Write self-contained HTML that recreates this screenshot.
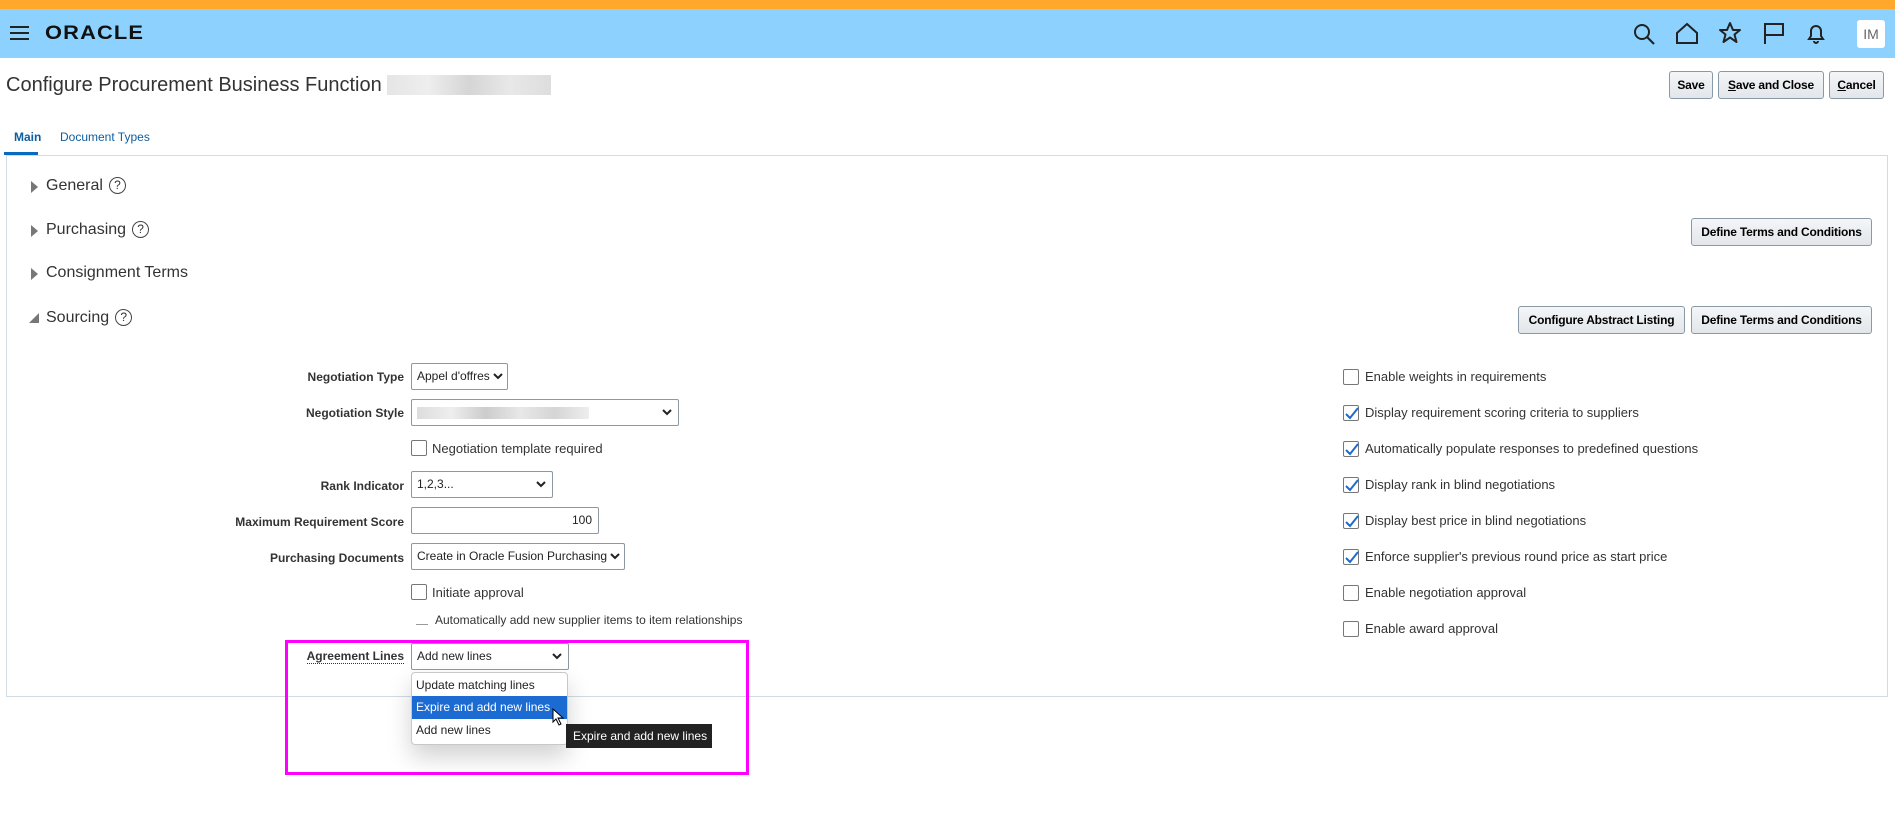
<!DOCTYPE html>
<html><head><meta charset="utf-8"><style>
*{box-sizing:border-box;margin:0;padding:0}
body{width:1895px;height:823px;background:#fff;font-family:"Liberation Sans",Arial,sans-serif;color:#333;position:relative;overflow:hidden}
.a{position:absolute}
.top{left:0;top:0;width:1895px;height:9px;background:#ffa82c}
.hdr{left:0;top:9px;width:1895px;height:49px;background:#8dd2ff}
.btn{position:absolute;height:28px;border:1px solid #8a99a8;border-radius:3px;background:linear-gradient(#f4f6f8,#e2e6ea);font-weight:bold;font-size:12px;color:#000;text-align:center;line-height:26px;white-space:nowrap;letter-spacing:-0.2px}
.lbl{position:absolute;right:1491px;font-size:12px;font-weight:bold;color:#333;white-space:nowrap}
.sel{position:absolute;left:411px;height:27px;border:1px solid #8e98a3;border-radius:2px;background:#fff;font-size:12px;line-height:25px;padding-left:5px;color:#222;white-space:nowrap;overflow:hidden}
.sel svg{position:absolute;right:6px;top:9px}
.cb{position:absolute;width:16px;height:16px;border:1px solid #777;border-radius:2px;background:#fff}
.ct{position:absolute;font-size:13px;color:#333;white-space:nowrap}
.sec{position:absolute;left:46px;font-size:16px;color:#333}
.tri{position:absolute;left:31px;width:0;height:0;border-top:6px solid transparent;border-bottom:6px solid transparent;border-left:7px solid #777}
.q{display:inline-block;width:17px;height:17px;border:1.3px solid #444;border-radius:50%;font-size:12px;text-align:center;line-height:15px;margin-left:6px;vertical-align:1px}
</style></head><body>
<div class="a top"></div>
<div class="a hdr">
 <svg class="a" style="left:10px;top:16px" width="20" height="16"><path d="M0 2h19M0 8h19M0 14h19" stroke="#222" stroke-width="2"/></svg>
 <div class="a" style="left:45px;top:14px;font-size:19px;font-weight:bold;letter-spacing:1px;color:#111;transform:scaleX(1.15);transform-origin:left">ORACLE</div>
 <svg class="a" style="left:1632px;top:13px" width="24" height="24"><circle cx="10" cy="10" r="7" fill="none" stroke="#222" stroke-width="2"/><path d="M15 15l7 7" stroke="#222" stroke-width="2.2"/></svg>
 <svg class="a" style="left:1675px;top:12px" width="24" height="24"><path d="M2 12L12 3l10 9v10H2z" fill="none" stroke="#222" stroke-width="2"/></svg>
 <svg class="a" style="left:1718px;top:12px" width="24" height="24"><path d="M12 2l3 7h7l-5.5 4.5 2 7.5-6.5-4.5-6.5 4.5 2-7.5L2 9h7z" fill="none" stroke="#222" stroke-width="2" stroke-linejoin="round"/></svg>
 <svg class="a" style="left:1762px;top:12px" width="24" height="24"><path d="M3 23V3h18v11H3" fill="none" stroke="#222" stroke-width="2"/></svg>
 <svg class="a" style="left:1804px;top:12px" width="24" height="24"><path d="M5 18h14l-2-3v-5a5 5 0 0 0-10 0v5z" fill="none" stroke="#222" stroke-width="2"/><path d="M10 20a2 2 0 0 0 4 0" fill="none" stroke="#222" stroke-width="2"/></svg>
 <div class="a" style="left:1857px;top:11px;width:28px;height:28px;background:#fff;border-radius:3px;font-size:14px;color:#666;text-align:center;line-height:28px">IM</div>
</div>
<div class="a" style="left:6px;top:74px;font-size:20px;color:#333">Configure Procurement Business Function <span style="display:inline-block;width:164px;height:20px;vertical-align:-4px;background:linear-gradient(90deg,#e5e5e5,#eee,#d5d5d5,#e8e8e8,#ddd)"></span></div>
<div class="btn" style="left:1669px;top:71px;width:44px">Save</div>
<div class="btn" style="left:1718px;top:71px;width:106px"><u>S</u>ave and Close</div>
<div class="btn" style="left:1829px;top:71px;width:55px"><u>C</u>ancel</div>
<div class="a" style="left:14px;top:130px;font-size:12px;color:#0e5d9e;font-weight:bold">Main</div>
<div class="a" style="left:60px;top:130px;font-size:12px;color:#0e5d9e">Document Types</div>
<div class="a" style="left:4px;top:152px;width:34px;height:3px;background:#0a6ac1"></div>
<div class="a" style="left:6px;top:155px;width:1882px;height:542px;border:1px solid #d3dbe2"></div>
<div class="tri" style="top:181px"></div><div class="sec" style="top:177px">General<span class="q">?</span></div>
<div class="tri" style="top:225px"></div><div class="sec" style="top:221px">Purchasing<span class="q">?</span></div>
<div class="tri" style="top:268px"></div><div class="sec" style="top:264px">Consignment Terms</div>
<svg class="a" style="left:28px;top:312px" width="12" height="12"><path d="M11 1L11 11L1 11z" fill="#777"/></svg>
<div class="sec" style="top:309px">Sourcing<span class="q">?</span></div>
<div class="btn" style="left:1691px;top:218px;width:181px">Define Terms and Conditions</div>
<div class="btn" style="left:1518px;top:306px;width:167px">Configure Abstract Listing</div>
<div class="btn" style="left:1691px;top:306px;width:181px">Define Terms and Conditions</div>

<div class="lbl" style="top:370px">Negotiation Type</div>
<div class="sel" style="top:363px;width:97px">Appel d'offres<svg width="10" height="7" style="right:4px"><path d="M1 1l4 4 4-4" fill="none" stroke="#222" stroke-width="2"/></svg></div>
<div class="lbl" style="top:406px">Negotiation Style</div>
<div class="sel" style="top:399px;width:268px"><span style="display:inline-block;width:172px;height:12px;vertical-align:middle;background:linear-gradient(90deg,#ddd,#eee,#ccc,#e8e8e8,#d5d5d5,#eee)"></span><svg width="10" height="7"><path d="M1 1l4 4 4-4" fill="none" stroke="#222" stroke-width="2"/></svg></div>
<div class="cb" style="left:411px;top:440px"></div><div class="ct" style="left:432px;top:441px">Negotiation template required</div>
<div class="lbl" style="top:479px">Rank Indicator</div>
<div class="sel" style="top:471px;width:142px">1,2,3...<svg width="10" height="7"><path d="M1 1l4 4 4-4" fill="none" stroke="#222" stroke-width="2"/></svg></div>
<div class="lbl" style="top:515px">Maximum Requirement Score</div>
<div class="sel" style="top:507px;width:188px;text-align:right;padding-right:6px">100</div>
<div class="lbl" style="top:551px">Purchasing Documents</div>
<div class="sel" style="top:543px;width:214px">Create in Oracle Fusion Purchasing<svg width="10" height="7" style="right:4px"><path d="M1 1l4 4 4-4" fill="none" stroke="#222" stroke-width="2"/></svg></div>
<div class="cb" style="left:411px;top:584px"></div><div class="ct" style="left:432px;top:585px">Initiate approval</div>
<div class="a" style="left:416px;top:624px;width:12px;height:1px;background:#999"></div>
<div class="ct" style="left:435px;top:613px;font-size:12px">Automatically add new supplier items to item relationships</div>
<div class="a" style="left:285px;top:640px;width:464px;height:135px;border:3px solid #ff00ff"></div>
<div class="lbl" style="top:649px;border-bottom:1px dotted #333">Agreement Lines</div>
<div class="sel" style="top:643px;width:158px">Add new lines<svg width="10" height="7"><path d="M1 1l4 4 4-4" fill="none" stroke="#222" stroke-width="2"/></svg></div>
<div class="a" style="left:411px;top:672px;width:157px;height:73px;border:1px solid #c8c8c8;border-radius:4px;background:#fff;box-shadow:0 12px 24px rgba(0,0,0,.18);font-size:12px;color:#222;white-space:nowrap">
 <div style="padding:5px 0 0 4px;height:23px">Update matching lines</div>
 <div style="background:#1b6bd2;color:#fff;height:23px;line-height:23px;padding-left:4px">Expire and add new lines</div>
 <div style="padding:4px 0 0 4px">Add new lines</div>
</div>
<svg class="a" style="left:552px;top:708px" width="14" height="18"><path d="M1 1v13l3-3 3 6 2-1-3-6h5z" fill="#fff" stroke="#000" stroke-width="1"/></svg>
<div class="a" style="left:566px;top:724px;width:146px;height:24px;background:#222;color:#fff;font-size:12px;line-height:24px;padding-left:7px;white-space:nowrap">Expire and add new lines</div>

<div class="cb" style="left:1343px;top:369px"></div><div class="ct" style="left:1365px;top:369px">Enable weights in requirements</div>
<div class="cb" style="left:1343px;top:405px"></div><div class="ct" style="left:1365px;top:405px">Display requirement scoring criteria to suppliers</div>
<div class="cb" style="left:1343px;top:441px"></div><div class="ct" style="left:1365px;top:441px">Automatically populate responses to predefined questions</div>
<div class="cb" style="left:1343px;top:477px"></div><div class="ct" style="left:1365px;top:477px">Display rank in blind negotiations</div>
<div class="cb" style="left:1343px;top:513px"></div><div class="ct" style="left:1365px;top:513px">Display best price in blind negotiations</div>
<div class="cb" style="left:1343px;top:549px"></div><div class="ct" style="left:1365px;top:549px">Enforce supplier's previous round price as start price</div>
<div class="cb" style="left:1343px;top:585px"></div><div class="ct" style="left:1365px;top:585px">Enable negotiation approval</div>
<div class="cb" style="left:1343px;top:621px"></div><div class="ct" style="left:1365px;top:621px">Enable award approval</div>
<svg class="a" style="left:1343px;top:400px" width="18" height="170"><g fill="none" stroke="#1b6bd2" stroke-width="2"><path d="M3 14l4 4 8-10"/><path d="M3 50l4 4 8-10"/><path d="M3 86l4 4 8-10"/><path d="M3 122l4 4 8-10"/><path d="M3 158l4 4 8-10"/></g></svg>
</body></html>
